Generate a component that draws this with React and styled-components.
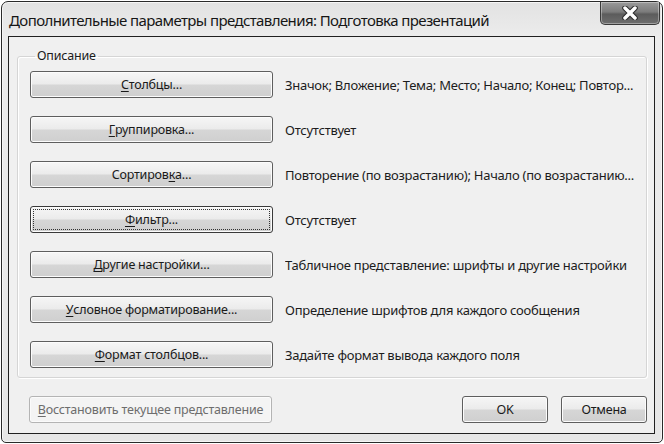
import React from 'react';
import styled, { createGlobalStyle, css } from 'styled-components';

const Global = createGlobalStyle`
  html, body {
    margin: 0;
    padding: 0;
    background: #ffffff;
  }
  body {
    font-family: "Noto Sans", "Open Sans", sans-serif;
    color: #1c1c1c;
  }
`;

//Window frame
const Window = styled.div`
  box-sizing: border-box;
  width: 662px;
  height: 442px;
  margin: 1px 0 0 1px;
  border: 1px solid #2a2a2a;
  border-radius: 7px 7px 5px 5px;
  background: linear-gradient(180deg, #e2e2e2 0%, #ececec 8%, #e6e6e6 100%);
  box-shadow: inset 0 0 0 1px #f6f6f6;
  display: flex;
  flex-direction: column;
  padding: 0 7px 8px 6px;
`;

const TitleBar = styled.div`
  height: 34px;
  display: flex;
  align-items: flex-start;
  justify-content: space-between;
`;

const Title = styled.div`
  font-size: 15px;
  letter-spacing: -0.6px;
  line-height: 20px;
  padding: 8px 0 0 1px;
  color: #161616;
`;

const CloseButton = styled.div`
  width: 58px;
  height: 22px;
  margin-right: -5px;
  border: 1px solid #3a3a3a;
  border-top: none;
  border-radius: 0 0 5px 5px;
  background: linear-gradient(180deg, #9a9a9a 0%, #7c7c7c 45%, #5c5c5c 55%, #6e6e6e 100%);
  box-shadow: inset 0 0 0 1px rgba(255, 255, 255, 0.35);
  display: flex;
  align-items: center;
  justify-content: center;
`;

const Client = styled.div`
  flex: 1;
  border: 1px solid #202020;
  background: #f0f0f0;
  display: flex;
  flex-direction: column;
  padding: 11px 7px 5px 8px;
`;

//Group box
const Group = styled.fieldset`
  margin: 0;
  padding: 7px 0 9px 12px;
  border: 1px solid #d5d5d5;
  border-radius: 3px;
  box-shadow: inset 1px 1px 0 #ffffff, 1px 1px 0 #ffffff;
  display: flex;
  flex-direction: column;
  gap: 18px;
`;

const Legend = styled.legend`
  font-size: 12.5px;
  letter-spacing: -0.2px;
  padding: 0 2px;
  margin-left: 5px;
  line-height: 16px;
`;

const Row = styled.div`
  display: flex;
  align-items: center;
  gap: 12px;
`;

const Button = styled.div`
  box-sizing: border-box;
  width: ${p => p.$w || 243}px;
  height: 27px;
  flex: none;
  border: 1px solid ${p => (p.$disabled ? '#b4b4b4' : p.$default ? '#3a3a3a' : '#5e5e5e')};
  border-radius: 3px;
  background: ${p =>
    p.$disabled
      ? '#f4f4f4'
      : 'linear-gradient(180deg, #f6f6f6 0%, #ebebeb 48%, #d6d6d6 52%, #cfcfcf 100%)'};
  box-shadow: inset 0 0 0 1px ${p => (p.$disabled ? '#fbfbfb' : '#fcfcfc')};
  display: flex;
  align-items: center;
  justify-content: center;
  font-size: 12.5px;
  letter-spacing: -0.2px;
  color: ${p => (p.$disabled ? '#6d6d6d' : '#1a1a1a')};
  position: relative;
  ${p =>
    p.$focus &&
    css`
      &::after {
        content: '';
        position: absolute;
        inset: 2px;
        border: 1px dotted #333;
        border-radius: 1px;
      }
    `}
`;

const Key = styled.span`
  text-decoration: underline;
  text-underline-offset: 2px;
`;

const Desc = styled.div`
  font-size: 13px;
  letter-spacing: -0.25px;
  color: #1c1c1c;
  width: 352px;
  white-space: nowrap;
  overflow: hidden;
`;

const Footer = styled.div`
  margin-top: 18px;
  display: flex;
  align-items: center;
  gap: 13px;
  padding-left: 12px;
`;

const Spacer = styled.div`
  flex: 1;
`;

const CloseIcon = () => (
  <svg width="22" height="14" viewBox="0 0 22 14">
    <path d="M6 2 L16 12 M16 2 L6 12" stroke="#2a2a2a" strokeWidth="5.5" strokeLinecap="round" />
    <path d="M6 2 L16 12 M16 2 L6 12" stroke="#ffffff" strokeWidth="3.5" strokeLinecap="round" />
  </svg>
);

const rows = [
  { k: 'С', label: 'толбцы...', desc: 'Значок; Вложение; Тема; Место; Начало; Конец; Повтор...' },
  { k: 'Г', label: 'руппировка...', desc: 'Отсутствует' },
  { pre: 'Сортиров', k: 'к', label: 'а...', desc: 'Повторение (по возрастанию); Начало (по возрастанию...' },
  { k: 'Ф', label: 'ильтр...', desc: 'Отсутствует', focus: true },
  { k: 'Д', label: 'ругие настройки...', desc: 'Табличное представление: шрифты и другие настройки' },
  { k: 'У', label: 'словное форматирование...', desc: 'Определение шрифтов для каждого сообщения' },
  { k: 'Ф', label: 'ормат столбцов...', desc: 'Задайте формат вывода каждого поля' },
];

export default function App() {
  return (
    <>
      <Global />
      <Window>
        <TitleBar>
          <Title>Дополнительные параметры представления: Подготовка презентаций</Title>
          <CloseButton><CloseIcon /></CloseButton>
        </TitleBar>
        <Client>
          <Group>
            <Legend>Описание</Legend>
            {rows.map((r, i) => (
              <Row key={i}>
                <Button $focus={r.focus} $default={r.focus}>
                  {r.pre}<Key>{r.k}</Key>{r.label}
                </Button>
                <Desc>{r.desc}</Desc>
              </Row>
            ))}
          </Group>
          <Footer>
            <Button $disabled>
              <Key>В</Key>осстановить текущее представление
            </Button>
            <Spacer />
            <Button $w={86}>OK</Button>
            <Button $w={86}>Отмена</Button>
          </Footer>
        </Client>
      </Window>
    </>
  );
}
